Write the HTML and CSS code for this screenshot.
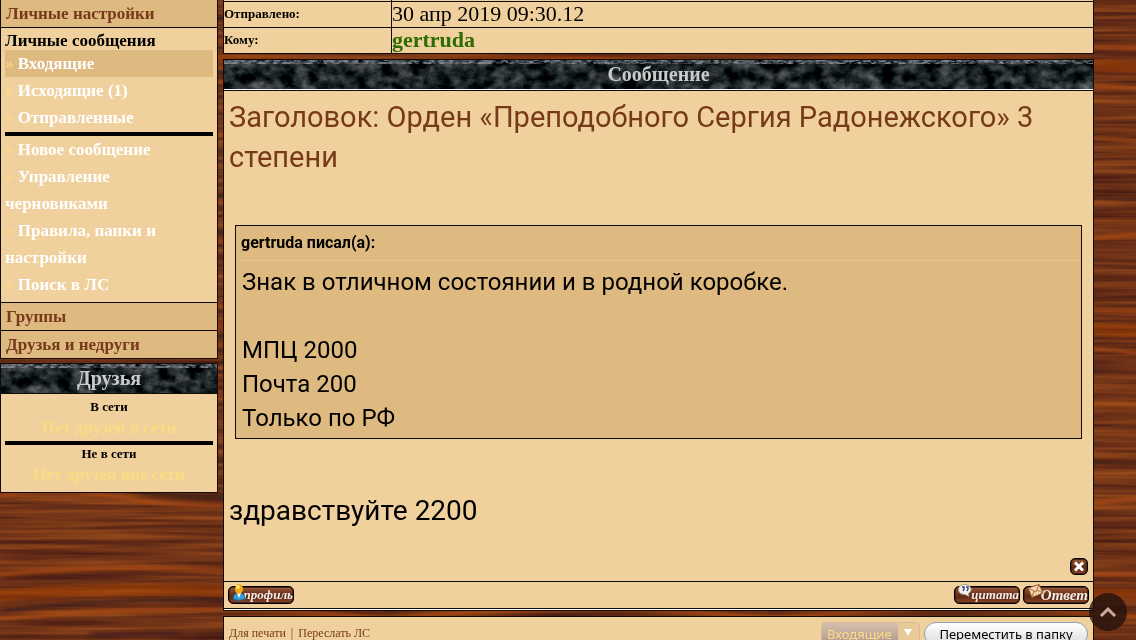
FILE: index.html
```html
<!DOCTYPE html>
<html lang="ru">
<head>
<meta charset="utf-8">
<meta name="viewport" content="width=device-width, initial-scale=1">
<title>Личные сообщения</title>
<link rel="stylesheet" href="styles.css">
</head>
<body>
<svg class="wood" aria-hidden="true">
  <defs>
    <filter id="grain" x="0" y="0" width="100%" height="100%" color-interpolation-filters="sRGB">
      <feTurbulence type="fractalNoise" baseFrequency="0.006 0.2" numOctaves="3" seed="8"/>
      <feColorMatrix values="0.46 0 0 0 0.21  0.26 0 0 0 0.07  0.04 0 0 0 0.07  0 0 0 0 1"/>
    </filter>
    <filter id="stone" x="0" y="0" width="100%" height="100%" color-interpolation-filters="sRGB">
      <feTurbulence type="fractalNoise" baseFrequency="0.07 0.09" numOctaves="5" seed="5"/>
      <feColorMatrix values="0.62 0.3 0 0 -0.35  0.56 0.3 0 0 -0.29  0.58 0.3 0 0 -0.29  0 0 0 0 1"/>
    </filter>
    <filter id="speckle" x="0" y="0" width="100%" height="100%" color-interpolation-filters="sRGB">
      <feTurbulence type="fractalNoise" baseFrequency="0.2 0.4" numOctaves="3" seed="2"/>
      <feColorMatrix values="0 0 0 0 0.5  0 0 0 0 0.52  0 0 0 0 0.56  2.4 0 0 0 -0.75"/>
    </filter>
    <filter id="soft"><feGaussianBlur stdDeviation="3 1"/></filter>
    <pattern id="streaks" width="384" height="264" patternUnits="userSpaceOnUse">
      <g fill="none" filter="url(#soft)">
        <path d="M-10 233C60 220 100 230 150 238S300 240 394 233" stroke="#b04d0e" stroke-width="5" opacity=".6"/>
        <path d="M130 227Q200 238 280 228" stroke="#341716" stroke-width="4" opacity=".7"/>
        <path d="M-10 47Q100 36 220 42T394 47" stroke="#ad490e" stroke-width="5" opacity=".6"/>
        <path d="M-10 54Q100 44 220 48T394 54" stroke="#4a2018" stroke-width="2" opacity=".7"/>
        <path d="M-10 68Q100 60 200 62T394 68" stroke="#a9440c" stroke-width="12" opacity=".5"/>
        <path d="M0 83Q110 70 230 72" stroke="#38171a" stroke-width="4" opacity=".7"/>
        <path d="M-10 92Q100 80 210 81T394 92" stroke="#b34c0c" stroke-width="4" opacity=".6"/>
        <path d="M90 106H180" stroke="#38171a" stroke-width="5" opacity=".6"/>
        <path d="M-10 143Q180 126 394 143" stroke="#b5540e" stroke-width="5" opacity=".5"/>
        <path d="M-10 200Q180 192 394 200" stroke="#3c1a18" stroke-width="4" opacity=".6"/>
      </g>
    </pattern>
  </defs>
  <rect width="100%" height="100%" filter="url(#grain)"/>
  <rect width="100%" height="100%" fill="url(#streaks)"/>
</svg>

<div class="page">
  <aside class="sidebar">
    <nav class="panel menu">
      <a class="tab" href="#">Личные настройки</a>
      <section class="section">
        <h2 class="section-title">Личные сообщения</h2>
        <ul class="folders">
          <li class="current"><a href="#">Входящие</a></li>
          <li><a href="#">Исходящие (1)</a></li>
          <li><a href="#">Отправленные</a></li>
        </ul>
        <hr class="rule">
        <ul class="folders">
          <li><a href="#">Новое сообщение</a></li>
          <li><a href="#">Управление черновиками</a></li>
          <li><a href="#">Правила, папки и настройки</a></li>
          <li><a href="#">Поиск в ЛС</a></li>
        </ul>
      </section>
      <a class="tab" href="#">Группы</a>
      <a class="tab" href="#">Друзья и недруги</a>
    </nav>

    <section class="panel friends">
      <h2 class="bar"><svg class="marble" aria-hidden="true"><rect width="100%" height="100%" filter="url(#stone)"/><rect width="100%" height="4" filter="url(#speckle)"/></svg><span>Друзья</span></h2>
      <div class="friends-body">
        <h3 class="state">В сети</h3>
        <p class="nobody">Нет друзей в сети</p>
        <hr class="rule">
        <h3 class="state">Не в сети</h3>
        <p class="nobody">Нет друзей вне сети</p>
      </div>
    </section>
  </aside>

  <main class="main">
    <table class="details">
      <tbody>
        <tr class="edge"><th></th><td></td></tr>
        <tr><th scope="row">Отправлено:</th><td>30 апр 2019 09:30.12</td></tr>
        <tr><th scope="row">Кому:</th><td><a class="user" href="#">gertruda</a></td></tr>
      </tbody>
    </table>

    <article class="panel message">
      <h2 class="bar"><svg class="marble" aria-hidden="true"><rect width="100%" height="100%" filter="url(#stone)"/><rect width="100%" height="4" filter="url(#speckle)"/></svg><span>Сообщение</span></h2>
      <div class="body">
        <h1 class="subject">Заголовок: Орден «Преподобного Сергия Радонежского» 3 степени</h1>
        <blockquote class="quote">
          <div class="quote-author">gertruda писал(а):</div>
          <div class="quote-text">Знак в отличном состоянии и в родной коробке.<br><br>МПЦ 2000<br>Почта 200<br>Только по РФ</div>
        </blockquote>
        <p class="reply">здравствуйте 2200</p>
        <div class="tools">
          <button class="wood-button delete" type="button" aria-label="Удалить">
            <svg viewBox="0 0 16 15" aria-hidden="true"><path d="M4 3.500l8 8M12 3.500l-8 8" stroke="#fff" stroke-width="3"/></svg>
          </button>
        </div>
      </div>
      <footer class="actions">
        <button class="wood-button profile" type="button">
          <svg class="icon" viewBox="0 0 14 17" aria-hidden="true"><path d="M1 15Q1 9 7 9T13 15Q7 18 1 15Z" fill="#3b9fd4" stroke="#17618f"/><path d="M5 9l2 5 2-5z" fill="#fff"/><ellipse cx="7" cy="5" rx="4" ry="5" fill="#f6a916"/><ellipse cx="6" cy="3" rx="2" ry="2" fill="#ffe168"/></svg>
          <span>профиль</span>
        </button>
        <button class="wood-button cite" type="button">
          <svg class="icon" viewBox="0 0 14 13" aria-hidden="true"><path d="M7 .5C3 .5.500 2.500.500 5.500S3 10.500 7 10.500l4 2-.5-3C16 6 12 .5 7 .5Z" fill="#f1f1e9" stroke="#a39b8c"/><path d="M4 3h2v2L5 7M8 3h2v2L9 7" fill="none" stroke="#32428c" stroke-width="1.400"/></svg>
          <span>цитата</span>
        </button>
        <button class="wood-button answer" type="button">
          <svg class="icon" viewBox="0 0 17 14" aria-hidden="true"><path d="M1 4L12 .5 16 9 5 13.500Z" fill="#f4d3aa" stroke="#8d5732"/><path d="M1 4l8 4 3-7.500M5 13.500L7 7M16 9L10 6" fill="none" stroke="#b06f43"/></svg>
          <span>Ответ</span>
        </button>
      </footer>
    </article>

    <form class="panel bottom">
      <p class="links"><a href="#">Для печати</a><span>|</span><a href="#">Переслать ЛС</a></p>
      <div class="picker">
        <select class="folder" aria-label="Папка"><option>Входящие</option></select>
        <svg class="arrow" viewBox="0 0 8 7" aria-hidden="true"><path d="M0 0h8L4 7z" fill="#fff"/></svg>
      </div>
      <button class="move" type="button">Переместить в папку</button>
    </form>
  </main>
</div>

<button class="to-top" type="button" aria-label="Наверх">
  <svg viewBox="0 0 18 12" aria-hidden="true"><path d="M2 10l7-7 7 7" fill="none" stroke="#cdab9b" stroke-width="3"/></svg>
</button>
</body>
</html>
```
FILE: styles.css
```css
* {
  box-sizing: border-box;
}

body {
  margin: 0;
  background: #6f351a;
  color: #000;
  font-family: "Liberation Serif", serif;
  overflow: hidden;
}

h1, h2, h3, p, ul, blockquote {
  margin: 0;
  padding: 0;
}

a {
  color: inherit;
  text-decoration: none;
}

button, select {
  margin: 0;
  cursor: pointer;
}

.wood {
  position: fixed;
  inset: 0;
  width: 100%;
  height: 100%;
  z-index: -1;
}

.page {
  display: grid;
  grid-template-columns: 218px minmax(0, 1fr);
  gap: 5px;
  align-items: start;
  padding-right: 42px;
  height: 100vh;
  overflow: hidden;
}

.panel {
  background: #f0d19d;
  border: 1px solid #120c08;
}

/* Sidebar */
.sidebar {
  display: grid;
  gap: 4px;
}

.menu {
  border-top: 0;
  font-size: 17px;
  font-weight: bold;
  line-height: 27px;
}

.tab {
  display: block;
  padding-left: 5px;
  background: #deb980;
  color: #763a1b;
  line-height: 27px;
}

.tab + .tab {
  border-top: 1px solid #120c08;
}

.section {
  padding: 1px 4px 4px;
  border: solid #120c08;
  border-width: 1px 0;
}

.section-title {
  height: 21px;
  font-size: 17px;
  line-height: 24px;
}

.folders {
  list-style: none;
  color: #fff;
}

.folders li {
  padding-right: 12px;
}

.folders li::before {
  content: "» ";
  color: #fbdc83;
  font-weight: normal;
}

.folders .current {
  background: #deb980;
}

.rule {
  height: 4px;
  margin: 1px 0 0;
  border: 0;
  background: #000;
}

.bar {
  position: relative;
  height: 30px;
  border-bottom: 1px solid #120c08;
  color: #c9cbcb;
  font-size: 20px;
  line-height: 28px;
  text-align: center;
  overflow: hidden;
}

.marble {
  position: absolute;
  inset: 0;
  width: 100%;
  height: 100%;
}

.bar span {
  position: relative;
}

.friends-body {
  padding: 4px 4px 5px;
  text-align: center;
}

.state {
  font-size: 13px;
  line-height: 17px;
}

.nobody {
  color: #fbdc83;
  font-size: 17px;
  font-weight: bold;
  line-height: 25px;
}

/* Message details */
.main {
  display: grid;
  gap: 5px;
  min-width: 0;
}

.details {
  width: 100%;
  border-collapse: collapse;
  background: #f0d19d;
}

.details th,
.details td {
  height: 26px;
  padding: 0;
  border: 1px solid #120c08;
  text-align: left;
  line-height: 24px;
}

.details .edge th,
.details .edge td {
  height: 1px;
  border-top: 0;
  line-height: 1px;
}

.details th {
  width: 168px;
  font-size: 13px;
}

.details td {
  font-size: 22px;
}

.user {
  color: #2d6c00;
  font-weight: bold;
}

/* Message */
.message {
  padding-bottom: 3px;
  border-bottom: 0;
  box-shadow: 0 -1px #120c08 inset, 0 -2px #fff inset, 0 -3px #120c08 inset;
}

.message .bar {
  height: 31px;
  background: #fff;
}

.message .marble {
  height: 29px;
}

.body {
  padding: 6px 5px;
  font-family: Roboto, sans-serif;
}

.subject {
  color: #763a1b;
  font-size: 29px;
  font-weight: normal;
  line-height: 40px;
}

.quote {
  margin: 48px 6px 0;
  background: #deb980;
  border: 1px solid #120c08;
}

.quote-author {
  padding: 0 5px;
  border-bottom: 1px solid #e6c28d;
  font-size: 16px;
  font-weight: bold;
  line-height: 34px;
}

.quote-text {
  padding: 4px 6px 3px;
  font-size: 24px;
  line-height: 34px;
}

.reply {
  margin-top: 52px;
  font-size: 28px;
  line-height: 40px;
}

.tools {
  display: flex;
  justify-content: flex-end;
  padding-top: 27px;
}

.actions {
  display: flex;
  gap: 3px;
  align-items: flex-start;
  height: 27px;
  padding: 4px 4px 0;
  border-top: 1px solid #120c08;
}

.wood-button {
  position: relative;
  width: 66px;
  height: 18px;
  padding: 0;
  border: 1px solid #000;
  border-radius: 5px;
  background: linear-gradient(#9a5d40, #7c3d22 30%, #5d2815 60%, #8b4425);
  box-shadow: inset 0 0 0 1px #4a2416;
  color: #f4eee9;
  font: italic bold 13px/16px "Liberation Serif", serif;
  text-align: right;
}

.wood-button .icon {
  position: absolute;
  left: 3px;
  top: -3px;
  width: 14px;
}

.wood-button.answer {
  font-size: 15px;
}

.answer .icon {
  width: 17px;
}

.profile {
  margin-right: auto;
}

.delete {
  width: 18px;
  height: 17px;
}

.delete svg {
  display: block;
  width: 16px;
}

/* Bottom form */
.bottom {
  display: flex;
  gap: 4px;
  align-items: flex-start;
  height: 60px;
  padding: 5px 5px 0;
}

.links {
  display: flex;
  gap: 5px;
  margin-right: auto;
  color: #763a1b;
  font-size: 12px;
  line-height: 22px;
}

.picker {
  position: relative;
}

.folder {
  appearance: none;
  width: 99px;
  height: 24px;
  padding: 0 5px;
  border: 1px solid #d8bb91;
  border-radius: 4px;
  background: linear-gradient(90deg, transparent 76px, #e8c999 76px), linear-gradient(#d5c1ae, #ae948c);
  color: #fbdc83;
  font: 13px "Noto Sans", sans-serif;
}

.arrow {
  position: absolute;
  right: 8px;
  top: 7px;
  width: 8px;
  pointer-events: none;
}

.move {
  width: 164px;
  height: 24px;
  padding: 0;
  border: 1px solid #8fa3b3;
  border-radius: 12px;
  background: linear-gradient(#fff, #dcdcde);
  color: #000;
  font: 13px "Noto Sans", sans-serif;
  white-space: nowrap;
}

.to-top {
  position: fixed;
  right: 9px;
  bottom: 9px;
  width: 38px;
  height: 38px;
  padding: 0;
  border: 0;
  border-radius: 50%;
  background: rgb(35 18 12 / 80%);
}

.to-top svg {
  display: block;
  width: 18px;
  margin: 0 auto;
}
```
